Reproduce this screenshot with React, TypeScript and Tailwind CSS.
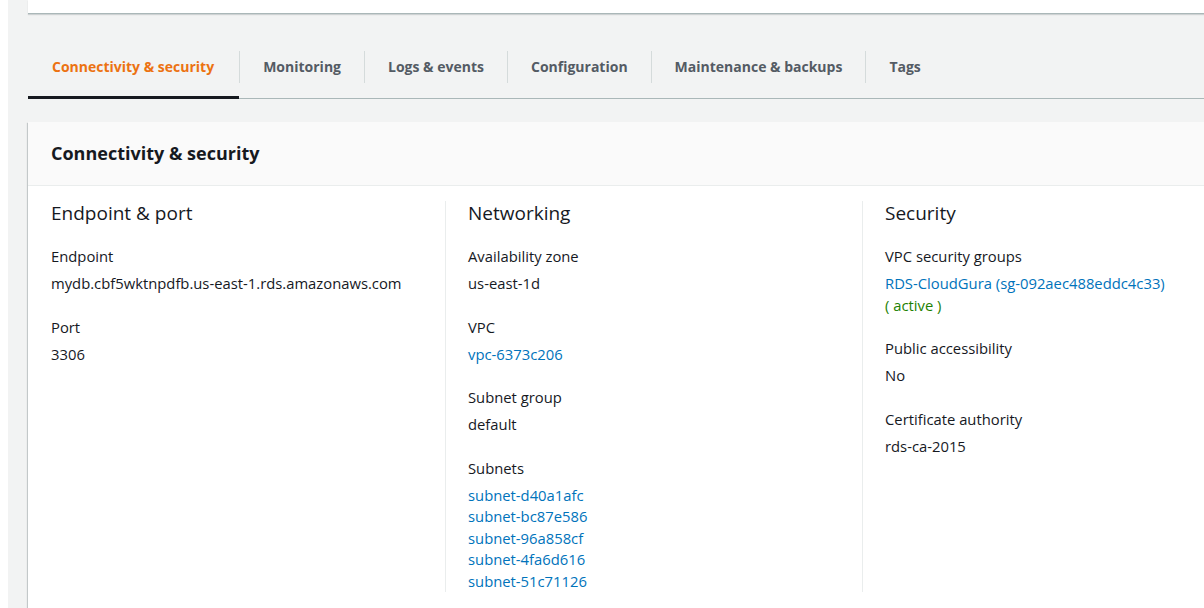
import React from "react";

const tabs = [
  "Connectivity & security",
  "Monitoring",
  "Logs & events",
  "Configuration",
  "Maintenance & backups",
  "Tags",
];

type Field = { label: string; values: { text: string; kind?: "link" | "ok" }[] };

const columns: { title: string; fields: Field[] }[] = [
  {
    title: "Endpoint & port",
    fields: [
      { label: "Endpoint", values: [{ text: "mydb.cbf5wktnpdfb.us-east-1.rds.amazonaws.com" }] },
      { label: "Port", values: [{ text: "3306" }] },
    ],
  },
  {
    title: "Networking",
    fields: [
      { label: "Availability zone", values: [{ text: "us-east-1d" }] },
      { label: "VPC", values: [{ text: "vpc-6373c206", kind: "link" }] },
      { label: "Subnet group", values: [{ text: "default" }] },
      {
        label: "Subnets",
        values: [
          { text: "subnet-d40a1afc", kind: "link" },
          { text: "subnet-bc87e586", kind: "link" },
          { text: "subnet-96a858cf", kind: "link" },
          { text: "subnet-4fa6d616", kind: "link" },
          { text: "subnet-51c71126", kind: "link" },
        ],
      },
    ],
  },
  {
    title: "Security",
    fields: [
      {
        label: "VPC security groups",
        values: [
          { text: "RDS-CloudGura (sg-092aec488eddc4c33)", kind: "link" },
          { text: "( active )", kind: "ok" },
        ],
      },
      { label: "Public accessibility", values: [{ text: "No" }] },
      { label: "Certificate authority", values: [{ text: "rds-ca-2015" }] },
    ],
  },
];

function FieldBlock({ field }: { field: Field }) {
  return (
    <div className="mb-[22px] last:mb-0">
      <div className="text-[14.8px] leading-[20px] text-[#16191f]">{field.label}</div>
      <div className="mt-[7px] text-[14.8px] leading-[21.5px]">
        {field.values.map((v) => (
          <div
            key={v.text}
            className={
              v.kind === "link"
                ? "text-[#0073bb]"
                : v.kind === "ok"
                ? "text-[#1d8102]"
                : "text-[#16191f]"
            }
          >
            {v.text}
          </div>
        ))}
      </div>
    </div>
  );
}

export default function App() {
  return (
    <div className="h-[608px] overflow-hidden bg-white pl-2 font-['Open_Sans',sans-serif]">
      <div className="h-full w-[1260px] bg-[#f2f3f3] pl-[20px]">
        {/* bottom edge of the card above */}
        <div className="h-[14px] border-b border-[#aab7b8] bg-white shadow-[0_1px_1px_rgba(0,28,36,0.15)]" />

        {/* tab strip */}
        <div className="mt-[21px] flex items-center border-b border-[#aab7b8]">
          {tabs.map((t, i) => (
            <React.Fragment key={t}>
              {i > 0 && <span className="h-8 w-px bg-[#d5dbdb]" />}
              <div
                className={
                  i === 0
                    ? "-mb-px flex h-[63px] items-center border-b-[3px] border-[#16191f] pl-[24px] pr-[25px] pt-[2px] text-[14px] font-bold text-[#ec7211]"
                    : "flex h-[63px] items-center px-[23px] text-[14px] font-bold text-[#545b64]"
                }
              >
                {t}
              </div>
            </React.Fragment>
          ))}
        </div>

        {/* details card */}
        <div className="mt-[23px] h-[500px] bg-white shadow-[0_1px_1px_rgba(0,28,36,0.3),1px_1px_1px_rgba(0,28,36,0.15),-1px_1px_1px_rgba(0,28,36,0.15)]">
          <div className="flex h-[64px] items-center border-b border-[#eaeded] bg-[#fafafa] px-[23px]">
            <h2 className="text-[18px] font-bold text-[#16191f]">Connectivity &amp; security</h2>
          </div>
          <div className="flex pt-[15px]">
            {columns.map((c, i) => (
              <div
                key={c.title}
                className={
                  i === 0
                    ? "w-[417px] shrink-0 px-[23px]"
                    : "w-[417px] shrink-0 border-l border-[#eaeded] px-[22px]"
                }
              >
                <h3 className="mb-[21px] text-[19px] leading-[24px] text-[#16191f]">{c.title}</h3>
                {c.fields.map((f) => (
                  <FieldBlock key={f.label} field={f} />
                ))}
              </div>
            ))}
          </div>
        </div>
      </div>
    </div>
  );
}
